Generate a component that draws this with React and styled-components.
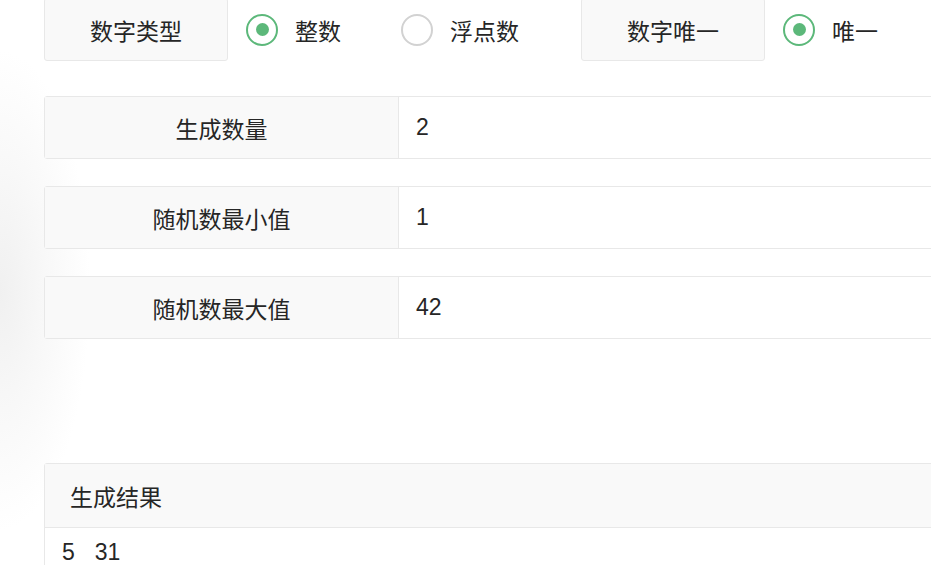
import React from "react";
import styled, { createGlobalStyle } from "styled-components";

const GlobalStyle = createGlobalStyle`
    html, body {
        margin: 0;
        padding: 0;
        background: #fff;
        overflow: hidden;
    }
    body {
        font-family: "Liberation Sans", "Noto Sans CJK SC", sans-serif;
        color: #262626;
    }
`;

const Page = styled.div`
    width: 931px;
    height: 565px;
    overflow: hidden;
    box-sizing: border-box;
    padding-left: 44px;
    background: radial-gradient(ellipse 90px 240px at 0 290px, #f0f0f0 0%, #f8f8f8 50%, #ffffff 100%);
`;

const OptionRow = styled.div`
    display: flex;
    align-items: center;
    height: 63px;
    margin-top: -2px;
`;

const OptionLabel = styled.div`
    width: 184px;
    height: 100%;
    box-sizing: border-box;
    display: flex;
    align-items: center;
    justify-content: center;
    background: #f9f9f9;
    border: 1px solid #e8e8e8;
    border-radius: 3px;
    font-size: 23px;
`;

const Option = styled.label`
    display: flex;
    align-items: center;
    gap: 17px;
    margin-left: 18px;
    margin-right: ${(props) => props.space || 0}px;
    font-size: 23px;
    cursor: pointer;
`;

const Radio = styled.span`
    width: 32px;
    height: 32px;
    box-sizing: border-box;
    border-radius: 50%;
    border: 2px solid ${(props) => (props.checked ? "#5cb87a" : "#d2d2d2")};
    display: flex;
    align-items: center;
    justify-content: center;

    &::after {
        content: "";
        width: 13px;
        height: 13px;
        border-radius: 50%;
        background: ${(props) => (props.checked ? "#5cb87a" : "transparent")};
    }
`;

const Fields = styled.div`
    display: flex;
    flex-direction: column;
    gap: 27px;
    margin-top: 35px;
`;

const Field = styled.div`
    display: flex;
    width: 960px;
    height: 63px;
    box-sizing: border-box;
    border: 1px solid #e8e8e8;
    border-radius: 3px;
`;

const FieldLabel = styled.div`
    width: 353px;
    flex-shrink: 0;
    display: flex;
    align-items: center;
    justify-content: center;
    background: #f9f9f9;
    border-right: 1px solid #e8e8e8;
    font-size: 23px;
`;

const FieldValue = styled.div`
    flex: 1;
    display: flex;
    align-items: center;
    padding-left: 17px;
    font-size: 23px;
    background: #fff;
`;

const Result = styled.div`
    width: 960px;
    margin-top: 124px;
    border: 1px solid #e8e8e8;
    border-radius: 3px;
    background: #fff;
`;

const ResultHeader = styled.div`
    height: 63px;
    display: flex;
    align-items: center;
    padding-left: 25px;
    background: #f9f9f9;
    border-bottom: 1px solid #e8e8e8;
    font-size: 23px;
`;

const ResultBody = styled.div`
    padding: 11px 17px;
    font-size: 23px;
    line-height: 26px;
    min-height: 60px;
`;

const Num = styled.span`
    margin-right: 20px;
`;

export default function App() {
    const fields = [
        ["生成数量", "2"],
        ["随机数最小值", "1"],
        ["随机数最大值", "42"],
    ];
    const result = [5, 31];

    return (
        <Page>
            <GlobalStyle />
            <OptionRow>
                <OptionLabel>数字类型</OptionLabel>
                <Option space={42}>
                    <Radio checked />
                    整数
                </Option>
                <Option space={62}>
                    <Radio />
                    浮点数
                </Option>
                <OptionLabel>数字唯一</OptionLabel>
                <Option>
                    <Radio checked />
                    唯一
                </Option>
            </OptionRow>
            <Fields>
                {fields.map(([label, value]) => (
                    <Field key={label}>
                        <FieldLabel>{label}</FieldLabel>
                        <FieldValue>{value}</FieldValue>
                    </Field>
                ))}
            </Fields>
            <Result>
                <ResultHeader>生成结果</ResultHeader>
                <ResultBody>
                    {result.map((n, i) => (
                        <Num key={i}>{n}</Num>
                    ))}
                </ResultBody>
            </Result>
        </Page>
    );
}
